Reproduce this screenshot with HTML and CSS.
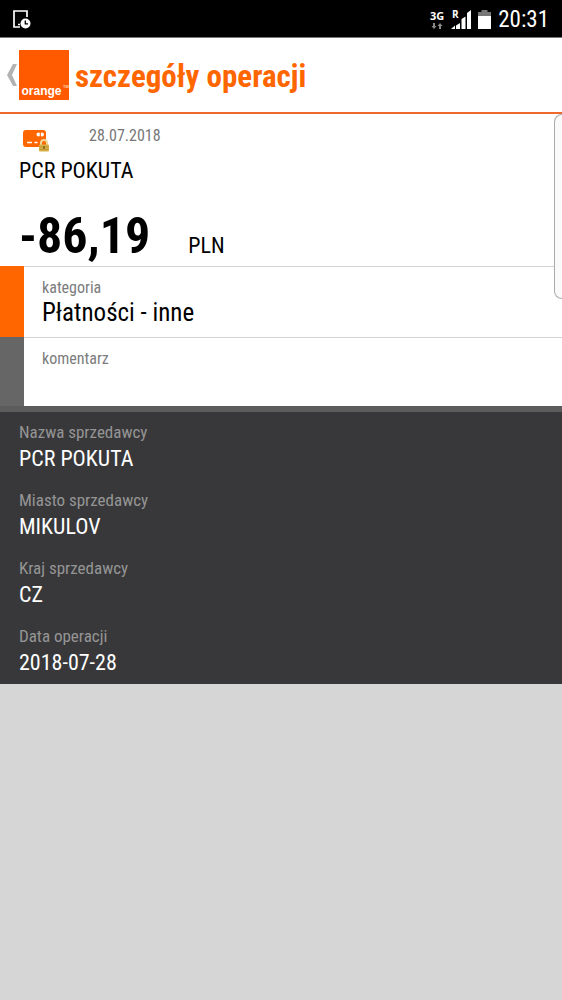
FILE: index.html
```html
<!DOCTYPE html>
<html lang="pl">
<head>
<meta charset="utf-8">
<meta name="viewport" content="width=device-width, initial-scale=1">
<title>szczegóły operacji</title>
<link rel="stylesheet" href="styles.css">
</head>
<body>
<div class="statusbar">
  <svg class="status-device" viewBox="0 0 18 19" width="18" height="19" aria-hidden="true">
    <path d="M14 7V1H1v16h6" fill="none" stroke="#fff" stroke-width="1.7"/>
    <path d="M5 14.500h2" stroke="#fff" stroke-width="1.500"/>
    <circle cx="12.500" cy="13.500" r="5" fill="#fff"/>
    <path d="M12.300 10.500v3.300h2.700" fill="none" stroke="#000" stroke-width="1.300"/>
  </svg>
  <div class="status-right">
    <div class="network">
      <span>3G</span>
      <svg viewBox="0 0 12 6" width="12" height="6" aria-hidden="true"><path d="M2 0h2v3h1.500L3 6 .5 3H2zM8 6h2V3h1.500L9 0 6.500 3H8z" fill="#8a8a8a"/></svg>
    </div>
    <svg class="signal" viewBox="0 0 20 20" width="20" height="20" role="img" aria-label="Roaming">
      <path d="M0 19l4-3.500V19zM5 15.500l4-2.500v6H5zM10.500 9l4-2.500V19h-4zM16 3l4-3v19h-4z" fill="#fff"/>
      <text class="roaming" x="1" y="8">R</text>
    </svg>
    <svg class="battery" viewBox="0 0 13 19" width="13" height="19" aria-hidden="true">
      <path d="M3.500 0h6v2H13v4H0V2h3.500z" fill="#777"/><path d="M0 6h13v13H0z" fill="#fff"/>
    </svg>
    <time class="clock">20:31</time>
  </div>
</div>
<header class="header">
  <a class="back" href="#" aria-label="Wstecz">
    <svg viewBox="0 0 12 24" width="12" height="24" aria-hidden="true"><path d="M6 1h4L5 12l5 11H6L0 12z" fill="#b3b3b3"/></svg>
    <svg class="logo" viewBox="0 0 50 50" width="50" height="50" aria-hidden="true">
      <path d="M0 0h50v50H0z" fill="#ff5a00"/>
      <text class="logo-name" x="2.500" y="45">orange</text>
      <text class="logo-mark" x="44" y="38">TM</text>
    </svg>
  </a>
  <h1 class="title">szczegóły operacji</h1>
</header>
<main>
  <section class="summary">
    <div class="meta">
      <svg class="card-icon" viewBox="0 0 27 24" width="27" height="24" aria-hidden="true">
        <rect x="0" y="1" width="23" height="17" rx="3" fill="#ff6600"/>
        <circle cx="15.500" cy="5.500" r="2" fill="#fff"/><circle cx="19" cy="5.500" r="2" fill="#fff"/>
        <path d="M17.300 3.200v4.600" stroke="#ff6600"/>
        <path d="M4 13.500h5M11.500 13.500h3" stroke="#fff" stroke-width="1.500"/>
        <path d="M18 16v-2a3 3 0 0 1 6 0v2" fill="none" stroke="#eed79d" stroke-width="2"/>
        <rect x="16" y="15.500" width="10" height="7" rx="1" fill="#d8b04a"/>
        <path d="M16.500 18h9M16.500 20.500h9" stroke="#b98a25" stroke-width=".7"/>
        <path d="M21 17v3" stroke="#6f5013" stroke-width="1.200"/>
      </svg>
      <time class="date" datetime="2018-07-28">28.07.2018</time>
    </div>
    <p class="value">PCR POKUTA</p>
    <p class="amount"><strong class="sum">-86,19</strong><span class="value">PLN</span></p>
  </section>
  <section class="fields">
    <button class="field category" type="button">
      <span class="label">kategoria</span>
      <span class="category-name">Płatności - inne</span>
    </button>
    <div class="field comment">
      <label class="label" for="comment">komentarz</label>
      <input class="comment-input" id="comment" type="text">
    </div>
  </section>
  <dl class="details">
    <div class="detail"><dt>Nazwa sprzedawcy</dt><dd class="value">PCR POKUTA</dd></div>
    <div class="detail"><dt>Miasto sprzedawcy</dt><dd class="value">MIKULOV</dd></div>
    <div class="detail"><dt>Kraj sprzedawcy</dt><dd class="value">CZ</dd></div>
    <div class="detail"><dt>Data operacji</dt><dd class="value">2018-07-28</dd></div>
  </dl>
  <div class="edge-panel"></div>
</main>
</body>
</html>
```
FILE: styles.css
```css
* { box-sizing: border-box; }
body, h1, p, dl, dd { margin: 0; }
body {
  min-height: 100vh;
  background: #d6d6d6;
  color: #000;
  font-family: "Roboto Condensed", Roboto, sans-serif;
  font-size: 16px;
  line-height: 20px;
}
svg { display: block; flex: none; }
.statusbar {
  display: flex;
  align-items: center;
  justify-content: space-between;
  height: 38px;
  padding: 2px 13px 0;
  border-bottom: 1px solid #777;
  background: #000;
  color: #fff;
}
.status-right { display: flex; align-items: center; gap: 7px; }
.network {
  display: flex;
  flex-direction: column;
  align-items: center;
  gap: 1px;
  font: bold 11px/12px "Open Sans", sans-serif;
}
.signal { overflow: visible; }
.roaming { fill: #fff; font: bold 10px "Open Sans", sans-serif; }
.clock { font-size: 23px; line-height: 28px; }
.header {
  display: flex;
  align-items: center;
  gap: 6px;
  height: 76px;
  padding-left: 7px;
  border-bottom: 2px solid #ee6a2c;
  background: #fff;
}
.back { display: flex; align-items: center; }
.logo-name { fill: #fff; font: bold 12px "Liberation Sans", sans-serif; }
.logo-mark { fill: #fff; font: 4px "Liberation Sans", sans-serif; }
.title { padding-top: 4px; color: #ff6600; font-size: 31px; line-height: 40px; }
main { position: relative; }
.summary { padding: 12px 19px 0; background: #fff; }
.meta { display: flex; align-items: flex-start; gap: 39px; padding-left: 4px; }
.card-icon { margin-top: 3px; }
.date { color: #777; }
.value { font-size: 22px; line-height: 28px; }
.summary > .value { margin-top: 4px; }
.amount { display: flex; align-items: baseline; gap: 38px; padding: 22px 0 1px; }
.sum { font-size: 50px; line-height: 58px; }
.fields { border-bottom: 6px solid #5c5c5c; }
.field {
  display: flex;
  flex-direction: column;
  align-items: stretch;
  justify-content: flex-start;
  width: 100%;
  border: 0 solid #ff6600;
  border-left-width: 24px;
  padding: 12px 18px 0;
  background: #fff;
  box-shadow: inset 0 1px #d4d4d4;
  color: #000;
  font: inherit;
  text-align: left;
}
.label { color: #7c7c7c; }
.category { min-height: 71px; }
.category-name { font-size: 25px; line-height: 30px; }
.comment { min-height: 69px; border-left-color: #666; }
.comment-input {
  width: 100%;
  height: 32px;
  padding: 0;
  border: 0;
  outline: 0;
  background: transparent;
  font: inherit;
}
.details {
  display: grid;
  gap: 17px;
  padding: 10px 19px 7px;
  background: #38383a;
  color: #fff;
}
.detail { display: grid; gap: 3px; }
.detail dt { color: #959595; font-size: 17px; }
.edge-panel {
  position: absolute;
  top: 0;
  right: 0;
  width: 8px;
  height: 185px;
  border: 1px solid #aaa;
  border-right: 0;
  border-radius: 8px 0 0 8px;
  background: #fafafa;
}
```
